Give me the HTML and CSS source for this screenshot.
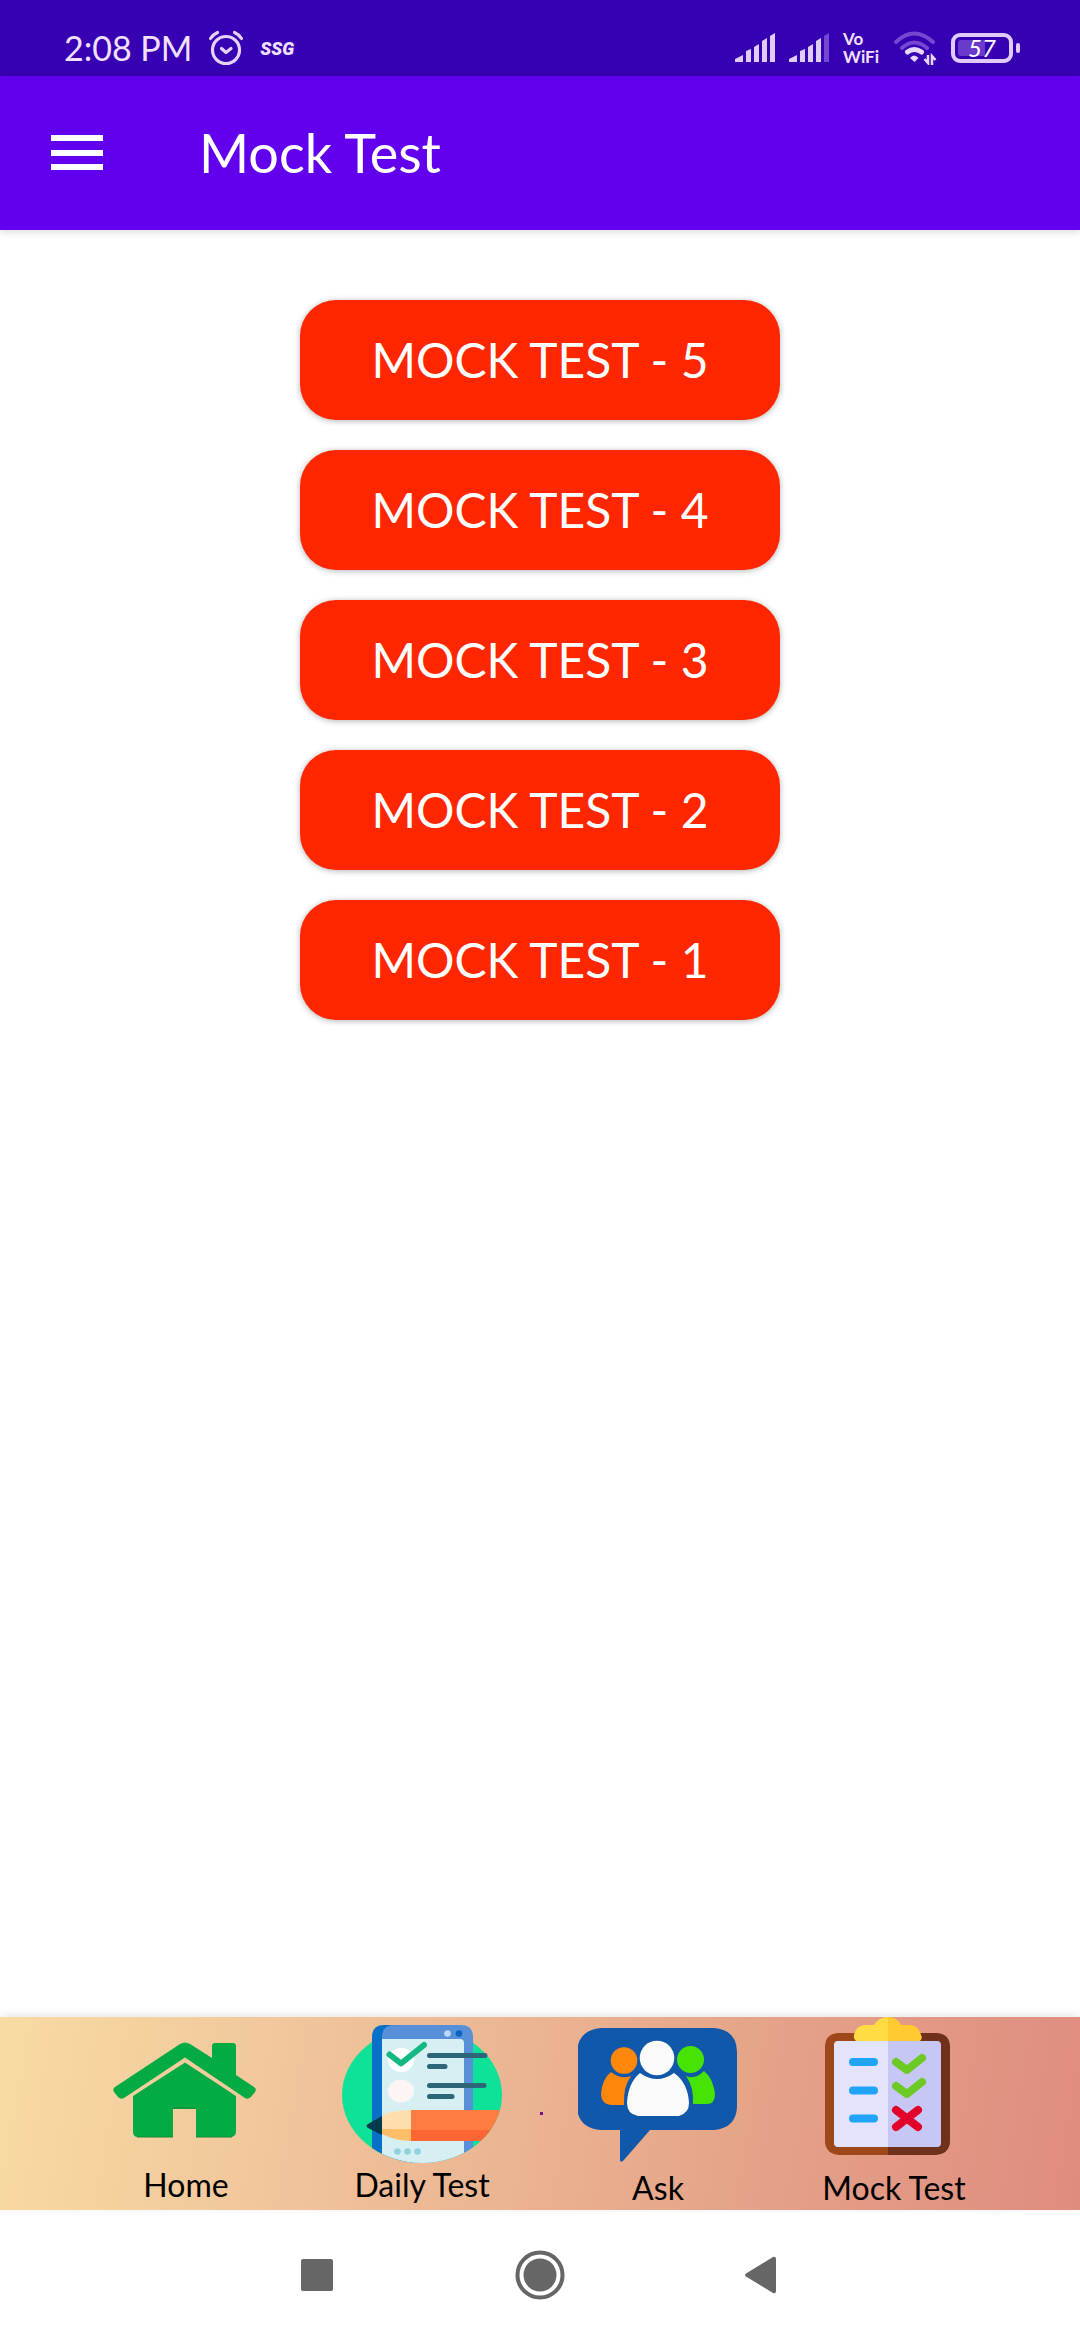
FILE: index.html
```html
<!DOCTYPE html>
<html lang="en">
<head>
<meta charset="utf-8">
<meta name="viewport" content="width=device-width, initial-scale=1">
<title>Mock Test</title>
<link rel="stylesheet" href="styles.css">
</head>
<body>
<div class="status">
  <div class="status-group status-left">
    <span class="time">2:08 PM</span>
    <svg class="alarm" width="36" height="36" viewBox="0 0 36 36" fill="none" stroke="#e6d3fb" stroke-width="3.2" stroke-linecap="round" stroke-linejoin="round" aria-hidden="true"><circle cx="18" cy="20" r="13.5"/><path d="M13.500 18.500 18 22.500 23 18.500M2.500 8.500Q5 4.500 9.500 2.500M33.500 8.500Q31 4.500 26.500 2.500"/></svg>
    <span class="ssg">SSG</span>
  </div>
  <div class="status-group status-right">
    <svg width="40" height="30" viewBox="0 0 40 30" fill="#e0ccf9" aria-hidden="true"><path d="M0 29V26L8 22V29ZM11 29V18L16 16V29ZM19 29V14L24 11V29ZM27 29V8L32 5V29ZM35 29V3L40 0V29Z"/></svg>
    <svg width="40" height="30" viewBox="0 0 40 30" fill="#e0ccf9" aria-hidden="true"><path d="M0 29V26L8 22V29ZM11 29V18L16 16V29ZM19 29V14L24 11V29ZM27 29V8L32 5V29Z"/><path fill="#7746d2" d="M35 29V3L40 0V29Z"/></svg>
    <span class="vowifi">Vo<br>WiFi</span>
    <svg width="44" height="34" viewBox="0 0 44 34" fill="none" stroke-width="4" stroke-linecap="round" aria-hidden="true"><path stroke="#7746d2" d="M3 11Q21 -6 40 11M9 17Q21 6 34 17"/><path stroke="#e8d8fc" stroke-width="5" d="M14.500 21Q21 16 28.500 21"/><path fill="#e8d8fc" d="M17 27Q21 22 25.500 27L21.500 31Z"/><path stroke="#e8d8fc" stroke-width="2.500" stroke-linecap="butt" d="M35 24V32L31.500 28M39 34V25L42.500 29"/></svg>
    <span class="battery"><span class="battery-case"><span class="battery-level">57</span></span></span>
  </div>
</div>

<header class="toolbar">
  <button class="menu" type="button" aria-label="Open menu">
    <svg width="52" height="36" viewBox="0 0 52 36" fill="#fff" aria-hidden="true"><path d="M0 0H52V6H0ZM0 15H52V21H0ZM0 29H52V35H0Z"/></svg>
  </button>
  <h1 class="title">Mock Test</h1>
</header>

<main class="tests">
  <button class="test" type="button">MOCK TEST - 5</button>
  <button class="test" type="button">MOCK TEST - 4</button>
  <button class="test" type="button">MOCK TEST - 3</button>
  <button class="test" type="button">MOCK TEST - 2</button>
  <button class="test" type="button">MOCK TEST - 1</button>
</main>

<nav class="tabs">
  <a class="tab" href="#home">
    <svg width="160" height="148" viewBox="0 0 160 148" fill="#04ab45" aria-hidden="true">
      <path d="M74 27Q79 24 84 27L106 41V29Q106 26 109 26H127Q130 26 130 29V58L148 70Q151 72 149 75L145 80Q142 83 139 81L79 40.500 18 81Q15 83 12 80L8 75Q6 72 9 70Z"/>
      <path d="M79 45.500 130 79V114Q130 120 124 120H90V92H67V120H32Q27 120 27 115V79Z"/>
      <path d="M67 91H90M31 120H67M90 120H126" stroke="#168936" stroke-width="1"/>
    </svg>
    <span>Home</span>
  </a>
  <a class="tab" href="#daily">
    <svg width="160" height="148" viewBox="0 0 160 148" aria-hidden="true">
      <clipPath id="round"><path d="M0 0H160V78A80 68 0 0 1 0 78Z"/></clipPath>
      <ellipse cx="80" cy="78" rx="80" ry="68" fill="#0ee298"/>
      <g clip-path="url(#round)">
        <path fill="#0770c8" d="M42 8H70V148H30V20Q30 8 42 8Z"/>
        <path fill="#5790d8" d="M52 8H119Q131 8 131 20V148H40V20Q40 8 52 8Z"/>
        <path fill="#d5eff3" d="M40 22H118Q122 22 122 26V148H40Z"/>
        <circle cx="105.500" cy="16.500" r="3.300" fill="#b5d9ff"/><circle cx="117" cy="16.500" r="3.300" fill="#0764c2"/>
        <ellipse cx="59" cy="43" rx="13" ry="12" fill="#fff"/><ellipse cx="59" cy="74" rx="13" ry="11.500" fill="#fdf4f4"/>
        <path d="M47.500 37.500 59 46.500 82 28" fill="none" stroke="#13b982" stroke-width="6" stroke-linejoin="round" stroke-linecap="round"/>
        <path d="M87.500 38.500H143M87.500 49.500H103M87.500 68.500H142M87.500 79.500H110" stroke="#2d6678" stroke-width="5" stroke-linecap="round"/>
        <path fill="#ffdfad" d="M40 98Q54 93 69 93V113H40Z"/><path fill="#ffbd68" d="M40 112H69V124Q54 124 40 117Z"/>
        <path fill="#053a4d" d="M40 99 26 107Q23 109 26 111L40 118Z"/>
        <path fill="#ff7c43" d="M69 93H160V113H69Z"/><path fill="#ff6434" d="M69 113H160V124H69Z"/>
        <g fill="#8fd1de"><circle cx="55.500" cy="134.500" r="3.300"/><circle cx="65.500" cy="134.500" r="3.300"/><circle cx="75.500" cy="134.500" r="3.300"/></g>
      </g>
    </svg>
    <span>Daily Test</span>
  </a>
  <a class="tab" href="#ask">
    <svg width="160" height="151" viewBox="0 0 160 151" aria-hidden="true">
      <path fill="#1258aa" d="M23 11H136Q159 13 159 35V90Q158 111 136 113H72L45 144Q42 146 42 143V113H23Q0 111 -1 90V35Q0 13 23 11Z"/>
      <path fill="#ff870c" d="M33 55Q43 63 53 59Q45 70 46 88H33Q23 87 23 77Q24 62 33 55Z"/><circle cx="46" cy="43.500" r="13.300" fill="#ff870c"/>
      <path fill="#47e302" d="M126 54Q117 63 108 59Q116 70 115 87H129Q137 87 137 77Q135 61 126 54Z"/><circle cx="112.500" cy="42.500" r="13.500" fill="#47e302"/>
      <path fill="#fafafa" d="M62 56Q79 68 96 56Q110 66 111 86Q111 96 101 99H60Q49 97 49 86Q50 66 62 56Z"/><circle cx="79" cy="41" r="17.300" fill="#fafafa"/>
    </svg>
    <span>Ask</span>
  </a>
  <a class="tab" href="#mock">
    <svg width="160" height="151" viewBox="0 0 160 151" aria-hidden="true">
      <path fill="#9d471b" d="M74 16H24Q11 17 11 30V125Q12 137 25 138H74Z"/><path fill="#70311c" d="M74 16H123Q136 17 136 30V125Q135 137 122 138H74Z"/>
      <path fill="#e3e4fb" d="M74 24H24Q20 24 20 28V126Q20 130 24 130H74Z"/><path fill="#c6c7f5" d="M74 24H123Q127 24 127 28V126Q127 130 123 130H74Z"/>
      <path fill="#ffdc43" d="M74 0V24H42Q39 21 40 18Q42 9 50 8H60Q65 0 74 0Z"/><path fill="#ffc92f" d="M74 0V24H106Q109 21 107 18Q105 9 97 8H87Q83 0 74 0Z"/>
      <path d="M39 45H60M39 73.500H60M39 101.500H60" stroke="#20a4f7" stroke-width="8" stroke-linecap="round"/>
      <g fill="none" stroke-width="8" stroke-linecap="round" stroke-linejoin="round"><path stroke="#6bcb24" d="M82 45 93 53 108 41M82 69 93 77 108 65"/><path stroke="#e3002b" d="M82 93 104 110M104 93 82 110"/></g>
    </svg>
    <span>Mock Test</span>
  </a>
</nav>

<div class="system">
  <button type="button" aria-label="Recent apps"><svg width="50" height="50" viewBox="0 0 50 50" fill="#666" aria-hidden="true"><rect x="9" y="9" width="32" height="32" rx="2"/></svg></button>
  <button type="button" aria-label="Home"><svg width="50" height="50" viewBox="0 0 50 50" fill="#666" aria-hidden="true"><circle cx="25" cy="25" r="16.500"/><circle cx="25" cy="25" r="22.500" fill="none" stroke="#666" stroke-width="4"/></svg></button>
  <button type="button" aria-label="Back"><svg width="50" height="50" viewBox="0 0 50 50" fill="#666" aria-hidden="true"><path d="M8 23.500 35 7Q38 6 38 9V41Q38 44 35 43L8 26.500Q6 25 8 23.500Z"/></svg></button>
</div>
</body>
</html>
```
FILE: styles.css
```css
* {
  box-sizing: border-box;
}

body {
  display: flex;
  flex-direction: column;
  min-height: 100vh;
  margin: 0;
  background: #fff;
  font-family: Lato, "Open Sans", sans-serif;
}

button {
  padding: 0;
  border: 0;
  background: none;
  font: inherit;
  color: inherit;
  cursor: pointer;
}

svg {
  display: block;
}

.status {
  display: flex;
  justify-content: space-between;
  align-items: center;
  height: 76px;
  padding: 20px 60px 0 64px;
  background: #3700b3;
  color: #f2e0fc;
}

.status-group {
  display: flex;
  align-items: center;
}

.status-left {
  gap: 16px;
}

.status-right {
  gap: 14px;
}

.time {
  font-size: 34px;
  line-height: 40px;
}

.ssg {
  font-family: Roboto, sans-serif;
  font-size: 18px;
  font-style: italic;
  font-weight: 900;
}

.vowifi {
  font-size: 17px;
  font-weight: 700;
  line-height: 18px;
}

.battery {
  display: flex;
  align-items: center;
  gap: 3px;
}

.battery::after {
  width: 4px;
  height: 10px;
  border-radius: 2px;
  background: #e0ccf9;
  content: "";
}

.battery-case {
  width: 62px;
  height: 30px;
  padding: 3px;
  border: 4px solid #e0ccf9;
  border-radius: 9px;
}

.battery-level {
  display: block;
  border-radius: 3px;
  background: linear-gradient(90deg, #6a3acb 57%, transparent 57%);
  color: #fff;
  font-size: 24px;
  font-style: italic;
  font-weight: 400;
  line-height: 16px;
  text-align: center;
}

.toolbar {
  display: flex;
  align-items: center;
  gap: 96px;
  height: 154px;
  padding: 0 51px;
  background: #6200ee;
  box-shadow: 0 2px 8px rgba(0, 0, 0, 0.15);
  color: #fff;
}

.title {
  margin: 0;
  font-size: 54px;
  font-weight: 400;
  line-height: 64px;
}

.tests {
  display: flex;
  flex: 1;
  flex-direction: column;
  align-items: center;
  gap: 30px;
  padding: 70px 24px;
}

.test {
  width: 480px;
  max-width: 100%;
  height: 120px;
  border-radius: 36px;
  background: #ff2600;
  box-shadow: 0 1px 6px rgba(0, 0, 0, 0.3);
  color: #fff;
  font-size: 48px;
  line-height: 64px;
}

.tabs {
  position: relative;
  display: grid;
  grid-template-columns: repeat(4, 1fr);
  min-height: 193px;
  padding: 0 68px;
  background: linear-gradient(100deg, #f8dba3, #f0c39a 30%, #e5a288 70%, #df8c80);
  box-shadow: 0 -2px 8px rgba(0, 0, 0, 0.1);
}

.tabs::after {
  position: absolute;
  top: 95px;
  left: 50%;
  width: 3px;
  height: 3px;
  background: #7a0a90;
  content: "";
}

.tab {
  display: flex;
  flex-direction: column;
  align-items: center;
  color: #000;
  font-size: 32px;
  line-height: 40px;
  text-decoration: none;
}

.system {
  display: grid;
  grid-template-columns: repeat(3, 1fr);
  place-items: center;
  height: 130px;
  padding: 0 206px;
  background: #fff;
}
```
